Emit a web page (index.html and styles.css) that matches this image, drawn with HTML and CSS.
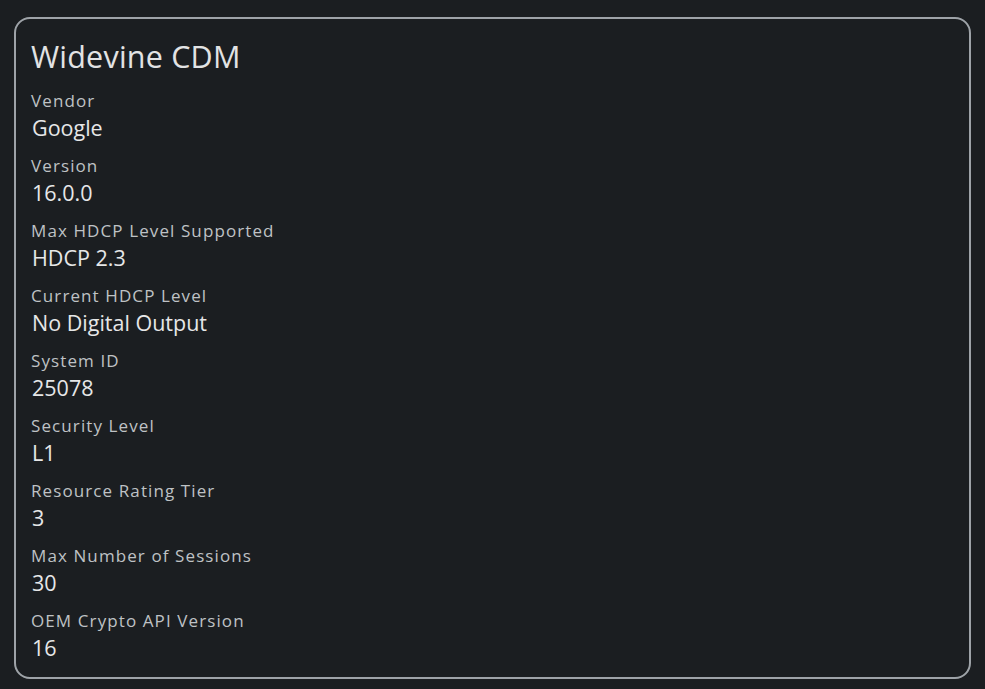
FILE: index.html
```html
<!DOCTYPE html>
<html>
	<head>
		<title>Widevine CDM</title>
		<link rel="stylesheet" href="styles.css">
	</head>
	<body>
		<div class="card">
			<h1 class="title">Widevine CDM</h1>
			<div class="row">
				<div class="label">Vendor</div>
				<div class="value">Google</div>
			</div>
			<div class="row">
				<div class="label">Version</div>
				<div class="value">16.0.0</div>
			</div>
			<div class="row">
				<div class="label">Max HDCP Level Supported</div>
				<div class="value">HDCP 2.3</div>
			</div>
			<div class="row">
				<div class="label">Current HDCP Level</div>
				<div class="value">No Digital Output</div>
			</div>
			<div class="row">
				<div class="label">System ID</div>
				<div class="value">25078</div>
			</div>
			<div class="row">
				<div class="label">Security Level</div>
				<div class="value">L1</div>
			</div>
			<div class="row">
				<div class="label">Resource Rating Tier</div>
				<div class="value">3</div>
			</div>
			<div class="row">
				<div class="label">Max Number of Sessions</div>
				<div class="value">30</div>
			</div>
			<div class="row">
				<div class="label">OEM Crypto API Version</div>
				<div class="value">16</div>
			</div>
		</div>
	</body>
</html>
```

FILE: styles.css
```css
html, body {
	background: #1b1e21;
}
body {
	margin: 0;
	padding: 17px 14px 11px;
	font-family: "Open Sans", "Noto Sans", sans-serif;
	color: #e6e7e8;
}
.card {
	border: 2px solid #9ea3a8;
	border-radius: 16px;
	padding: 17px 15px 15px;
}
.title {
	margin: 0 0 12px;
	font-size: 30.5px;
	font-weight: 400;
	line-height: 40px;
	letter-spacing: 0.2px;
	color: #e2e3e4;
}
.row {
	margin-bottom: 11px;
}
.row:last-child {
	margin-bottom: 0;
}
.label {
	font-size: 17px;
	line-height: 26px;
	letter-spacing: 1.1px;
	color: #bfc2c5;
}
.value {
	font-size: 21.5px;
	line-height: 28px;
	padding-left: 1px;
	color: #e6e7e8;
}
```
